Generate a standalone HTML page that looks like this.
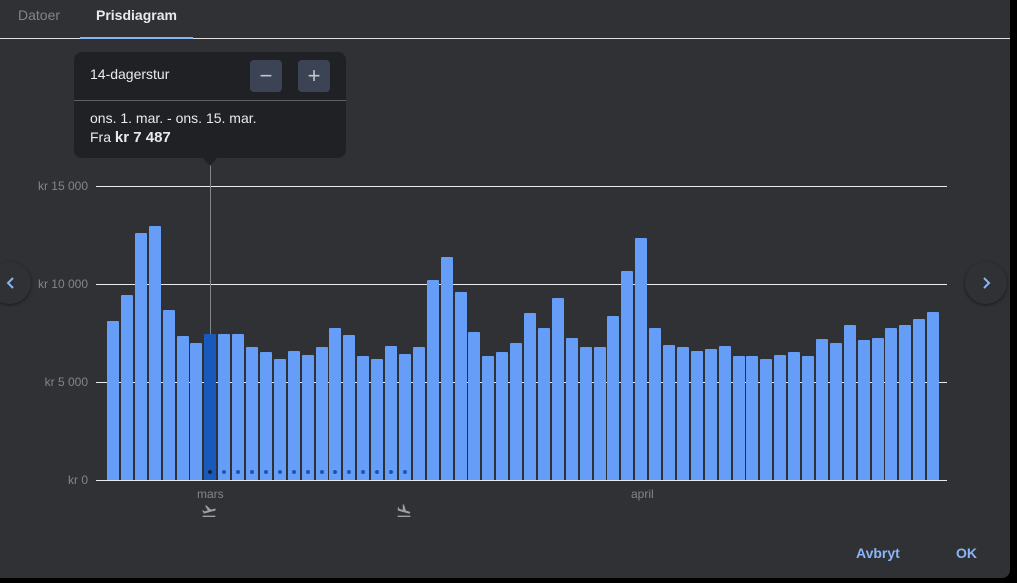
<!DOCTYPE html>
<html><head><meta charset="utf-8"><style>
body{margin:0;width:1017px;height:583px;background:#000;overflow:hidden;font-family:"Liberation Sans",Arial,sans-serif;position:relative}
.panel{position:absolute;left:0;top:0;width:1010px;height:578px;background:#303134;border-bottom-right-radius:8px}
.t{position:absolute;white-space:nowrap}
.ax{position:absolute;right:922px;font-size:12px;color:#80868b;text-align:right}
.grid{position:absolute;left:96px;width:851px;height:1px;background:#e8eaed}
.bar{position:absolute;width:12px;background:#669df6;border-radius:1px 1px 0 0}
.dot{position:absolute;width:4px;height:4px;border-radius:50%;background:#1a56b8;top:470px}
.nav{position:absolute;width:42px;height:42px;border-radius:50%;background:#303134;box-shadow:0 1px 3px rgba(0,0,0,.5);top:262px}
.btn{position:absolute;top:60px;width:32px;height:32px;border-radius:4px;background:#3c4354;color:#c4c7cc;font-size:22px;text-align:center;line-height:31px}
</style></head><body>
<div class="panel">
<div class="t" style="left:18px;top:7px;font-size:14px;color:#80868b">Datoer</div>
<div class="t" style="left:96px;top:7px;font-size:14px;color:#e8eaed;font-weight:bold">Prisdiagram</div>
<div style="position:absolute;left:0;top:38px;width:1010px;height:1px;background:#e0e0e0"></div>
<div style="position:absolute;left:80px;top:37px;width:113px;height:2px;background:#8ab4f8"></div>

<div class="grid" style="top:186px"></div>
<div class="grid" style="top:284px"></div>
<div class="grid" style="top:382px"></div>
<div class="grid" style="top:480px"></div>
<div class="ax" style="top:179px">kr 15 000</div>
<div class="ax" style="top:277px">kr 10 000</div>
<div class="ax" style="top:375px">kr 5 000</div>
<div class="ax" style="top:473px">kr 0</div>
<div style="position:absolute;left:210px;top:160px;width:1px;height:320px;background:#80868b"></div>
<div id="bars"></div>
<div class="t" style="left:197px;top:487px;font-size:12px;color:#80868b">mars</div>
<div class="t" style="left:631px;top:487px;font-size:12px;color:#80868b">april</div>
<svg style="position:absolute;left:201px;top:503px" width="16" height="16" viewBox="0 0 24 24"><path fill="#9aa0a6" d="M2.5 19h19v2h-19zm19.57-9.360c-.21-.8-1.04-1.28-1.840-1.060L14.92 10l-6.900-6.430-1.930.51 4.140 7.170-4.970 1.330-1.970-1.540-1.450.39 2.590 4.490 16.570-4.430c.81-.23 1.280-1.050 1.070-1.850z"/></svg>
<svg style="position:absolute;left:396px;top:503px" width="16" height="16" viewBox="0 0 24 24"><path fill="#9aa0a6" d="M2.5 19h19v2h-19zm7.18-5.730l4.350 1.160 5.310 1.420c.8.21 1.620-.26 1.840-1.060.21-.8-.26-1.620-1.060-1.840l-5.310-1.420-2.760-9.020L10.120 2v8.280L5.150 8.950l-.93-2.320-1.450-.39v5.170l1.600.43 5.310 1.430z"/></svg>

<div style="position:absolute;left:74px;top:52px;width:272px;height:106px;background:#202124;border-radius:8px"></div>
<div style="position:absolute;left:202px;top:157px;width:0;height:0;border-left:8px solid transparent;border-right:8px solid transparent;border-top:9px solid #202124"></div>
<div style="position:absolute;left:74px;top:100px;width:272px;height:1px;background:#5f6368"></div>
<div class="t" style="left:90px;top:66px;font-size:14px;color:#e8eaed">14-dagerstur</div>
<div class="btn" style="left:250px">−</div>
<div class="btn" style="left:298px">+</div>
<div class="t" style="left:90px;top:110px;font-size:14px;color:#e8eaed">ons. 1. mar. - ons. 15. mar.</div>
<div class="t" style="left:90px;top:129px;font-size:14px;color:#e8eaed">Fra <b style="font-size:15px">kr 7 487</b></div>

<div class="nav" style="left:-11px"><svg style="position:absolute;left:14px;top:13px" width="16" height="16" viewBox="0 0 16 16"><path d="M10 3L5 8l5 5" stroke="#8ab4f8" stroke-width="2" fill="none"/></svg></div>
<div class="nav" style="left:965px"><svg style="position:absolute;left:13px;top:13px" width="16" height="16" viewBox="0 0 16 16"><path d="M6 3l5 5-5 5" stroke="#8ab4f8" stroke-width="2" fill="none"/></svg></div>

<div class="t" style="left:856px;top:545px;font-size:14px;color:#8ab4f8;font-weight:bold">Avbryt</div>
<div class="t" style="left:956px;top:545px;font-size:14px;color:#8ab4f8;font-weight:bold">OK</div>
</div>
<script>
var tops=[321,295,233,226,310,336,343,334,334,334,347,352,359,351,355,347,328,335,356,359,346,354,347,280,257,292,332,356,352,343,313,328,298,338,347,347,316,271,238,328,345,347,351,349,346,356,356,359,355,352,356,339,343,325,340,338,328,325,319,312];
var h='';
for(var i=0;i<60;i++){var x=107+i*13.9;
h+='<div class="bar" style="left:'+x.toFixed(1)+'px;top:'+tops[i]+'px;height:'+(480-tops[i])+'px;'+(i==7?'background:#185abc':'')+'"></div>';
if(i>=7&&i<=21)h+='<div class="dot" style="left:'+(x+4).toFixed(1)+'px;'+(i==7?'background:#202124':'')+'"></div>';}
document.getElementById('bars').innerHTML=h;
</script>
</body></html>
